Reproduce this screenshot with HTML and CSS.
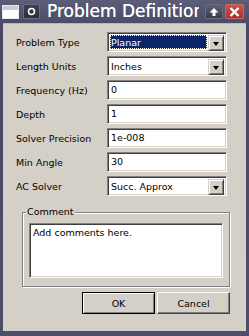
FILE: index.html
```html
<!DOCTYPE html>
<html lang="en">
<head>
  <meta charset="UTF-8" />
  <title>Problem Definition</title>
  <link rel="stylesheet" href="styles.css">
</head>
<body>
  <div class="window">
    <!-- TITLE BAR -->
    <div class="titlebar">
      <span class="tb-icon"></span>
      <span class="tb-btn tb-menu">
        <svg width="9" height="9" viewBox="0 0 9 9"><circle cx="4.5" cy="4.5" r="3" fill="none" stroke="#fff" stroke-width="1.6"/></svg>
      </span>
      <span class="title">Problem Definition</span>
      <span class="tb-btn tb-up">
        <svg width="10" height="10" viewBox="0 0 10 10"><path d="M5 1 L9.5 5.5 H6.5 V9 H3.5 V5.5 H0.5 Z" fill="#fff"/></svg>
      </span>
      <span class="tb-btn tb-close">
        <svg width="11" height="10" viewBox="0 0 11 10"><path d="M1.5 1 L9.5 9 M9.5 1 L1.5 9" stroke="#fff" stroke-width="2.4"/></svg>
      </span>
    </div>

    <!-- DIALOG BODY -->
    <div class="body">
      <div class="form">
        <label>Problem Type</label>
        <div class="combo">
          <span class="combo-text selected">Planar</span>
          <span class="combo-btn"><i class="arrow"></i></span>
        </div>

        <label>Length Units</label>
        <div class="combo">
          <span class="combo-text">Inches</span>
          <span class="combo-btn"><i class="arrow"></i></span>
        </div>

        <label>Frequency (Hz)</label>
        <div class="field">0</div>

        <label>Depth</label>
        <div class="field">1</div>

        <label>Solver Precision</label>
        <div class="field">1e-008</div>

        <label>Min Angle</label>
        <div class="field">30</div>

        <label>AC Solver</label>
        <div class="combo">
          <span class="combo-text">Succ. Approx</span>
          <span class="combo-btn"><i class="arrow"></i></span>
        </div>
      </div>

      <fieldset class="group">
        <legend>Comment</legend>
        <div class="memo">Add comments here.</div>
      </fieldset>

      <div class="buttons">
        <button class="btn default">OK</button>
        <button class="btn">Cancel</button>
      </div>
    </div>
  </div>
</body>
</html>
```

FILE: styles.css
```css
* {margin: 0; padding: 0; box-sizing: border-box;}
body {
  font-family: "DejaVu Sans", sans-serif;
  font-size: 9.5px;
  color: #000;
  background: #4c4e6a;
}

.window {
  width: 249px; height: 336px;
  display: flex; flex-direction: column;
  background: linear-gradient(180deg, #5b5d79 0%, #464863 30px, #4c4e6a 100%);
}

/* Title bar */
.titlebar {
  height: 23px; flex: none;
  display: flex; align-items: center;
  padding: 0 5px 0 2px;
  gap: 4px;
}
.tb-icon {
  width: 17px; height: 14px; flex: none;
  background: linear-gradient(180deg, #c9cad6 0 4px, #ffffff 4px);
  border: 1px solid #e8e8f0;
}
.tb-btn {
  height: 15px; flex: none;
  display: flex; align-items: center; justify-content: center;
  border: 1px solid #6a6c84;
  border-radius: 1px;
}
.tb-menu {width: 17px; background: linear-gradient(180deg, #3e404e, #2c2e3a);}
.tb-up {width: 18px; margin-left: 2px; background: linear-gradient(180deg, #60626e, #3a3c48);}
.tb-close {width: 19px; margin-left: -2px; background: linear-gradient(180deg, #d2524b, #a8302c); border-color: #c86a64;}
.title {
  flex: 1; min-width: 0;
  margin-left: 3px;
  color: #fff;
  font-size: 17px; line-height: 23px;
  white-space: nowrap; overflow: hidden;
  text-shadow: 0 0 0.6px #fff;
}

/* Body */
.body {
  flex: 1;
  margin: 0 3px 5px;
  background: #d4d0c8;
  border-top: 1px solid #b8b6b0;
}

.form {
  display: grid;
  grid-template-columns: 91px 120px;
  grid-auto-rows: 20px;
  row-gap: 4px;
  align-items: center;
  padding: 8px 0 0 13px;
}

.field, .combo {
  height: 20px;
  background: #fff;
  border: 1px solid;
  border-color: #808080 #fff #fff #808080;
  box-shadow: inset 1px 1px #404040, inset -1px -1px #d4d0c8;
}
.field {padding: 0 3px; line-height: 18px;}

.combo {display: flex; padding: 2px;}
.combo-text {flex: 1; line-height: 16px; padding-left: 1px; margin-right: 1px;}
.combo-text.selected {
  background: #0a246a; color: #fff;
  outline: 1px dotted #fff; outline-offset: -1px;
}
.combo-btn {
  width: 16px; height: 16px; flex: none;
  display: flex; align-items: center; justify-content: center;
  background: #d4d0c8;
  border: 1px solid;
  border-color: #d4d0c8 #404040 #404040 #d4d0c8;
  box-shadow: inset 1px 1px #fff, inset -1px -1px #808080;
}
.arrow {
  width: 0; height: 0;
  border-left: 3.5px solid transparent;
  border-right: 3.5px solid transparent;
  border-top: 4px solid #000;
  margin-top: 1px;
}

/* Comment group */
.group {
  margin: 10px 0 0 19px;
  width: 208px;
  padding: 5px 6px 8px;
  border: 1px solid #808080;
  box-shadow: inset 1px 1px #fff, 1px 1px 0 #fff;
}
.group legend {
  padding: 0 1px;
  margin-left: -3px;
  line-height: 12px;
  background: #d4d0c8;
}
.memo {
  height: 55px;
  background: #fff;
  padding: 2px 3px;
  line-height: 13px;
  border: 1px solid;
  border-color: #808080 #fff #fff #808080;
  box-shadow: inset 1px 1px #404040, inset -1px -1px #d4d0c8;
}

/* Buttons */
.buttons {
  display: flex; justify-content: flex-end; gap: 2px;
  margin-top: 5px;
  padding-right: 16px;
}
.btn {
  width: 73px; height: 22px;
  font-family: inherit; font-size: 9.5px;
  background: #d4d0c8;
  border: 1px solid;
  border-color: #fff #404040 #404040 #fff;
  box-shadow: inset -1px -1px #808080;
}
.btn.default {
  border-color: #000;
  box-shadow: inset 1px 1px #fff, inset -1px -1px #808080;
}
```
